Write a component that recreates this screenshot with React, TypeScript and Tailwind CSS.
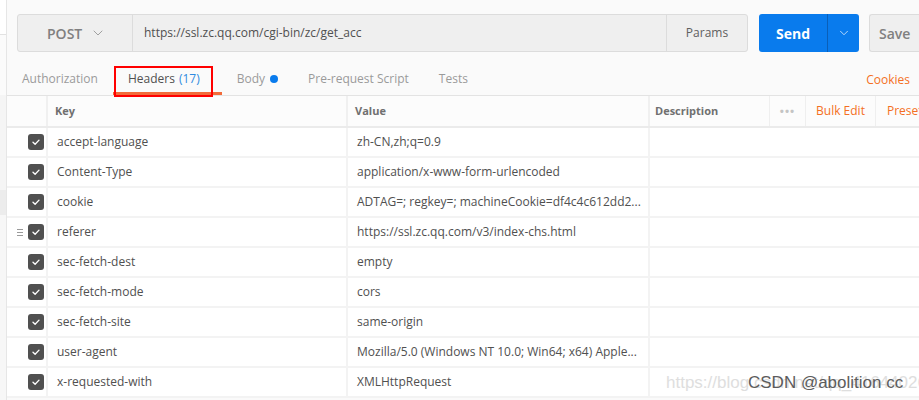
import { ChevronDown } from "lucide-react";

const headers = [
  ["accept-language", "zh-CN,zh;q=0.9"],
  ["Content-Type", "application/x-www-form-urlencoded"],
  ["cookie", "ADTAG=; regkey=; machineCookie=df4c4c612dd2..."],
  ["referer", "https://ssl.zc.qq.com/v3/index-chs.html"],
  ["sec-fetch-dest", "empty"],
  ["sec-fetch-mode", "cors"],
  ["sec-fetch-site", "same-origin"],
  ["user-agent", "Mozilla/5.0 (Windows NT 10.0; Win64; x64) Apple..."],
  ["x-requested-with", "XMLHttpRequest"],
];

const tabs = ["Authorization", "Headers", "Body", "Pre-request Script", "Tests"];

export default function App() {
  return (
    <div
      className="relative flex h-[400px] w-[919px] overflow-hidden bg-[#fafafa] text-[#505050]"
      style={{ fontFamily: '"Open Sans", "Noto Sans", sans-serif' }}
    >
      <Sidebar />
      <div className="flex min-w-0 flex-1 flex-col overflow-hidden">
        <RequestBar />
        <TabsRow />
        <HeadersTable />
      </div>

      {/* annotation box */}
      <div className="pointer-events-none absolute left-[114px] top-[66px] h-[31px] w-[99px] border-2 border-[#ff0000]" />

      {/* watermark */}
      <div
        className="pointer-events-none absolute left-[666px] top-[373px] whitespace-nowrap text-[17px] leading-5 text-[#dedede]"
        style={{ fontFamily: '"Liberation Sans", Arial, sans-serif' }}
      >
        https://blog.csdn.net/qq_41644026
      </div>
      <div
        className="pointer-events-none absolute left-[748px] top-[373px] whitespace-nowrap text-[17px] leading-5 text-[#5c5c5c]"
        style={{ fontFamily: '"Liberation Sans", Arial, sans-serif' }}
      >
        CSDN @abolition cc
      </div>
    </div>
  );
}

function Sidebar() {
  return (
    <div className="flex w-[7px] shrink-0 flex-col border-r border-[#e6e6e6] bg-[#fbfbfb]">
      <div className="h-[35px] border-b border-[#e2e2e2] bg-white" />
      <div className="h-[60px]" />
      <div className="h-[95px] bg-[#f5f5f5]" />
      <div className="h-[25px] bg-[#ececec]" />
      <div className="flex-1 bg-[#f7f7f7]" />
    </div>
  );
}

function RequestBar() {
  return (
    <div className="box-content flex h-[38px] items-stretch pl-[10px] pt-[14px]">
      <div className="flex w-[731px] shrink-0 items-stretch rounded-[3px] border border-[#dcdcdc] bg-[#efefef]">
        <div className="flex w-[115px] items-center border-r border-[#dcdcdc] pl-[29px] text-[14px] font-semibold text-[#808080]">
          POST
          <ChevronDown className="ml-[8px] h-[16px] w-[16px] text-[#a0a0a0]" strokeWidth={1.5} />
        </div>
        <div className="flex flex-1 items-center pl-[11px] text-[12px] text-[#505050]">
          https://ssl.zc.qq.com/cgi-bin/zc/get_acc
        </div>
        <div className="flex w-[81px] items-center justify-center border-l border-[#dcdcdc] text-[12px] text-[#606060]">
          Params
        </div>
      </div>
      <div className="ml-[11px] flex w-[100px] shrink-0 overflow-hidden rounded-[3px] bg-[#097bed]">
        <div className="flex w-[69px] items-center justify-center border-r border-[#0a5fb8] text-[14px] font-bold text-white">
          Send
        </div>
        <div className="flex flex-1 items-center justify-center">
          <ChevronDown className="h-[14px] w-[14px] text-[#cfe3fb]" strokeWidth={1.5} />
        </div>
      </div>
      <div className="ml-[10px] flex w-[60px] shrink-0 items-center rounded-l-[3px] border border-r-0 border-[#dcdcdc] bg-[#efefef] pl-[9px] text-[14px] font-semibold text-[#808080]">
        Save
      </div>
    </div>
  );
}

function TabsRow() {
  return (
    <div className="mt-[10px] flex h-[33px] items-stretch text-[12px] text-[#9a9a9a]">
      {tabs.map((t) => (
        <div
          key={t}
          className={
            t === "Headers"
              ? "flex items-center border-b-[3px] border-[#f26b3a] pl-[15px] pr-[22px] pt-[3px] text-[#505050]"
              : "flex items-center border-b-[3px] border-transparent px-[15px] pt-[3px]"
          }
        >
          {t}
          {t === "Headers" && <span className="ml-[4px] text-[#2f8ae0]">(17)</span>}
          {t === "Body" && <span className="ml-[5px] h-[8px] w-[8px] rounded-full bg-[#097bed]" />}
        </div>
      ))}
      <div className="ml-auto flex items-center pr-[9px] pt-[3px] text-[#f47023]">Cookies</div>
    </div>
  );
}

function HeadersTable() {
  return (
    <div className="border-t border-[#e3e3e3] bg-[#f4f4f4]">
      <div className="flex h-[32px] items-stretch border-b-2 border-[#ebebeb] bg-[#fcfcfc] text-[11px] font-bold text-[#707070]">
        <div className="w-[41px] shrink-0 border-r-2 border-[#f0f0f0]" />
        <div className="flex w-[300px] shrink-0 items-center border-r-2 border-[#f0f0f0] pl-[7px]">Key</div>
        <div className="flex w-[302px] shrink-0 items-center border-r-2 border-[#f0f0f0] pl-[7px]">Value</div>
        <div className="flex w-[120px] shrink-0 items-center border-r border-[#efefef] pl-[5px]">Description</div>
        <div className="flex w-[36px] shrink-0 items-center justify-center border-r border-[#efefef] tracking-[1px] text-[#c4c4c4]">•••</div>
        <div className="flex w-[70px] shrink-0 items-center justify-center border-r border-[#efefef] text-[12px] font-normal text-[#f47023]">Bulk Edit</div>
        <div className="flex min-w-0 flex-1 items-center whitespace-nowrap pl-[11px] text-[12px] font-normal text-[#f47023]">Presets</div>
      </div>
      {headers.map(([k, v], i) => (
        <div key={k} className="flex h-[30px] items-stretch border-b-2 border-[#f3f3f3] bg-white text-[12px]">
          <div className="flex w-[41px] shrink-0 items-center justify-end border-r-2 border-[#f3f3f3] pr-[2px]">
            {i === 3 && (
              <div className="mr-[5px] flex flex-col gap-[2px]">
                <span className="h-[1px] w-[6px] bg-[#9a9a9a]" />
                <span className="h-[1px] w-[6px] bg-[#9a9a9a]" />
                <span className="h-[1px] w-[6px] bg-[#9a9a9a]" />
              </div>
            )}
            <div className="flex h-[16px] w-[16px] items-center justify-center rounded-[3px] bg-[#505050]">
              <svg viewBox="0 0 16 16" className="h-[12px] w-[12px]">
                <path d="M4 8.3 L6.8 11 L12 5.5" fill="none" stroke="white" strokeWidth="1.8" strokeLinecap="round" strokeLinejoin="round" />
              </svg>
            </div>
          </div>
          <div className="flex w-[300px] shrink-0 items-center whitespace-nowrap border-r-2 border-[#f3f3f3] pl-[9px]">{k}</div>
          <div className="flex w-[302px] shrink-0 items-center whitespace-nowrap border-r-2 border-[#f3f3f3] pl-[9px]">{v}</div>
          <div className="min-w-0 flex-1" />
        </div>
      ))}
    </div>
  );
}
